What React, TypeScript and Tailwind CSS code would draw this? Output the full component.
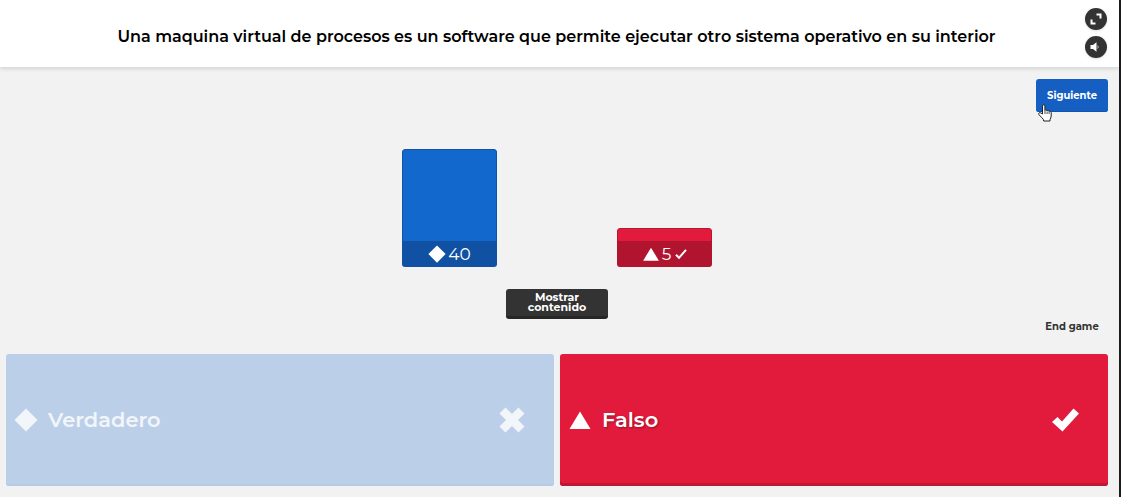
import type { ReactNode } from "react";

type Shape = "diamond" | "triangle";

function ShapeIcon({ shape, className }: { shape: Shape; className: string }) {
  return (
    <svg viewBox="0 0 24 24" className={className} fill="currentColor" aria-hidden="true">
      {shape === "diamond" ? <path d="M12 0.5 23.5 12 12 23.5 0.5 12Z" /> : <path d="M12 3.5 22.5 21H1.5Z" />}
    </svg>
  );
}

function RoundButton({ label, children }: { label: string; children: ReactNode }) {
  return (
    <button
      type="button"
      aria-label={label}
      className="flex size-[22px] items-center justify-center rounded-full bg-[#333333] text-white shadow-sm"
    >
      {children}
    </button>
  );
}

function HandCursor() {
  return (
    <svg viewBox="0 0 14 18" className="absolute top-[25px] left-0.5 h-[18px] w-3.5" aria-hidden="true">
      <path
        d="M4.5 10V2.1c0-1.9 2.4-1.9 2.4 0v4.4c.4-1 2-.8 2.1.5.5-.9 2-.6 2.1.6.7-.8 2.1-.3 2.1 1V12c0 1.700-.9 2.500-1.200 3.700V17H5.600v-1.300C4.400 14.400 2.900 12.600 1 10.700-.2 9.200 1.700 7.900 2.900 9Z"
        fill="white"
        stroke="#222222"
        strokeWidth="1"
        strokeLinejoin="round"
      />
      <path d="M7 7v3M9.100 7.500V10M11.100 8v2" stroke="#222222" strokeWidth="0.800" />
    </svg>
  );
}

const results: {
  shape: Shape;
  count: number;
  correct: boolean;
  height: number;
  fill: string;
  label: string;
}[] = [
  { shape: "diamond", count: 40, correct: false, height: 92, fill: "bg-[#1368ce] border-[#0f53a5]", label: "bg-[#1151a3]" },
  { shape: "triangle", count: 5, correct: true, height: 13, fill: "bg-[#e21b3c] border-[#b51630]", label: "bg-[#b1142f]" },
];

function Results() {
  return (
    <div className="flex items-end gap-30">
      {results.map((r) => (
        <div key={r.shape} className="w-[95px] overflow-hidden rounded-[3px]">
          <div className={`rounded-t-[3px] border border-b-0 ${r.fill}`} style={{ height: r.height }} />
          <div className={`flex h-[26px] items-center justify-center gap-0.5 text-[17px] leading-none text-white ${r.label}`}>
            <ShapeIcon shape={r.shape} className="size-[18px]" />
            <span>{r.count}</span>
            {r.correct && (
              <svg viewBox="0 0 12 12" className="ml-0.5 size-3" fill="none" aria-label="Correcta">
                <path d="M1 6.800 4 9.800 11 1.800" stroke="currentColor" strokeWidth="2" />
              </svg>
            )}
          </div>
        </div>
      ))}
    </div>
  );
}

export default function App() {
  return (
    <div className="flex min-h-screen flex-col border-r-2 border-[#1c1c1a] bg-[#f2f2f2] font-['Montserrat','Inter',sans-serif] text-[#333333]">
      <header className="grid grid-cols-[22px_1fr_22px] items-center bg-white pt-2 pr-3 pb-[9px] pl-1.5 shadow-[0_2px_4px_rgba(0,0,0,0.12)]">
        <h1 className="col-start-2 pt-2 text-center text-base font-semibold text-black">
          Una maquina virtual de procesos es un software que permite ejecutar otro sistema operativo en su interior
        </h1>
        <div className="flex flex-col gap-1.5">
          <RoundButton label="Pantalla completa">
            <svg viewBox="0 0 12 12" className="size-3" fill="none" stroke="currentColor" strokeWidth="2" aria-hidden="true">
              <path d="M6.500 1.500H10.500V5.500M1.500 6.500V10.500H5.500" />
            </svg>
          </RoundButton>
          <RoundButton label="Sonido">
            <svg viewBox="0 0 12 12" className="size-3" fill="currentColor" aria-hidden="true">
              <path d="M0.500 4H3L6.500 1.200V10.800L3 8H0.500Z" />
              <path d="M7.500 4.500Q9 6 7.500 7.500" fill="none" stroke="currentColor" strokeOpacity="0.700" />
            </svg>
          </RoundButton>
        </div>
      </header>

      <main className="flex flex-1 flex-col gap-5 pt-3 pr-[11px] pb-[11px] pl-1.5">
        <div className="grid grid-cols-[72px_1fr_72px]">
          <section className="col-start-2 flex flex-col items-center gap-[22px] pt-[70px] pb-[15px]">
            <Results />
            <button
              type="button"
              className="h-[30px] w-[102px] rounded-[3px] border-b-[3px] border-[#262626] bg-[#333333] px-4 pb-0.5 text-[11px] leading-[10px] font-bold text-white"
            >
              Mostrar contenido
            </button>
          </section>
          <div className="flex flex-col items-center justify-between">
            <div className="relative w-full">
              <button
                type="button"
                className="h-[33px] w-full rounded-[3px] bg-[#165fc2] text-[10px] font-bold text-white shadow-[inset_0_-1px_0_#1254ae]"
              >
                Siguiente
              </button>
              <HandCursor />
            </div>
            <a href="#end" className="text-[10px] leading-3.5 font-bold whitespace-nowrap">
              End game
            </a>
          </div>
        </div>

        <div className="grid flex-1 grid-cols-2 gap-1.5">
          <button
            type="button"
            className="flex min-h-[132px] items-center rounded-[3px] bg-[#bccfe8] pr-[29px] pl-2 text-left text-[#f2f5fa] shadow-[inset_0_-2px_0_#b7cbe5]"
          >
            <ShapeIcon shape="diamond" className="size-6" />
            <span className="flex-1 pl-2.5 text-[21px] font-semibold">Verdadero</span>
            <svg viewBox="0 0 26 26" className="size-[26px]" aria-label="Incorrecta">
              <path d="M3.500 3.500 22.500 22.500M22.500 3.500 3.500 22.500" stroke="currentColor" strokeWidth="8.500" />
            </svg>
          </button>
          <button
            type="button"
            className="flex min-h-[132px] items-center rounded-[3px] bg-[#e21b3c] pr-[29px] pl-2 text-left text-white shadow-[inset_0_-3px_0_#c01733]"
          >
            <ShapeIcon shape="triangle" className="size-6" />
            <span className="flex-1 pl-2.5 text-[21px] font-semibold [text-shadow:1px_1px_2px_rgba(0,0,0,0.35)]">Falso</span>
            <svg viewBox="0 0 27 24" className="h-6 w-[27px]" fill="currentColor" aria-label="Correcta">
              <path d="M0 14 5.500 9 10 13.500 21.500 0.500 27 5.500 10.500 23.500Z" />
            </svg>
          </button>
        </div>
      </main>
    </div>
  );
}
